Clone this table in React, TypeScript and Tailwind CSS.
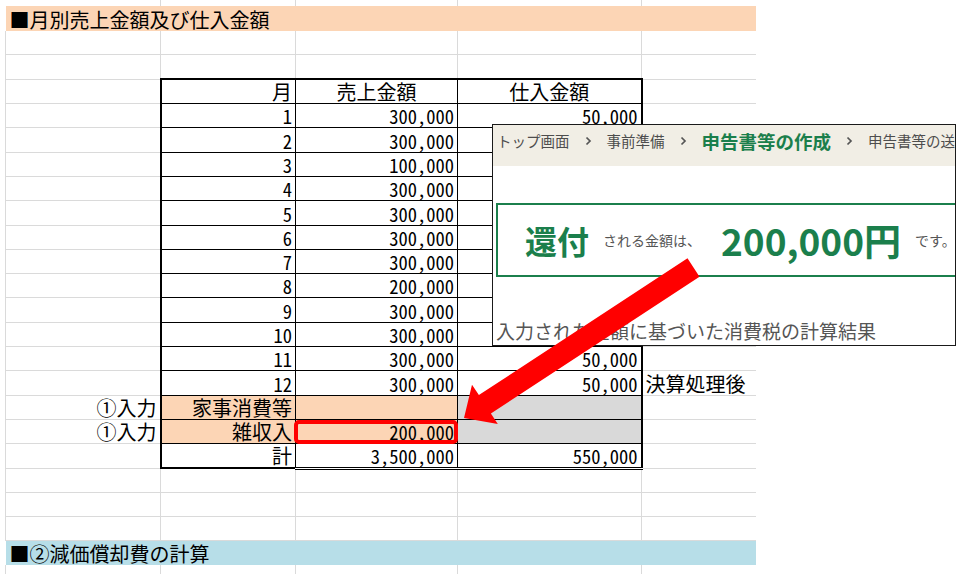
import React from "react";

const GREEN = "text-[#1b7f4c]";

type CellProps = { children?: React.ReactNode; className?: string; colSpan?: number };

// plain spreadsheet cell with light gridlines
function G({ children, className = "", colSpan }: CellProps) {
  return (
    <td
      colSpan={colSpan}
      className={
        "border-r border-b border-[#dadada] align-bottom leading-[20px] pb-[1px] whitespace-nowrap " +
        className
      }
    >
      {children}
    </td>
  );
}

// cell inside the bordered table
function T({ children, className = "", colSpan }: CellProps) {
  return (
    <td
      colSpan={colSpan}
      className={
        "border border-black align-bottom leading-[20px] pb-[1px] whitespace-nowrap " + className
      }
    >
      {children}
    </td>
  );
}

const NUM = "text-[18.5px] [font-feature-settings:'hwid'] text-right pr-[3px]";
const JP = "text-[20px]";

const months: [number, string, string][] = [
  [1, "300,000", "50,000"],
  [2, "300,000", "50,000"],
  [3, "100,000", "50,000"],
  [4, "300,000", "50,000"],
  [5, "300,000", "50,000"],
  [6, "300,000", "50,000"],
  [7, "300,000", "50,000"],
  [8, "200,000", "50,000"],
  [9, "300,000", "50,000"],
  [10, "300,000", "50,000"],
  [11, "300,000", "50,000"],
  [12, "300,000", "50,000"],
];

function EmptyRow() {
  return (
    <tr className="h-[24.3px]">
      <G className="border-l" />
      <G />
      <G />
      <G />
      <G className="border-r-0" />
    </tr>
  );
}

function Chevron() {
  return (
    <svg width="7" height="10" viewBox="0 0 7 10" className="mx-[15px] shrink-0">
      <path d="M1.5 1.5 L5 5 L1.5 8.5" fill="none" stroke="#555" strokeWidth="1.7" />
    </svg>
  );
}

export default function App() {
  return (
    <div className="relative w-[961px] h-[574px] overflow-hidden bg-white text-black font-['Noto_Sans_CJK_JP',sans-serif]">
      <table className="ml-[5px] table-fixed border-collapse w-[750px]">
        <colgroup>
          <col className="w-[155px]" />
          <col className="w-[135px]" />
          <col className="w-[162px]" />
          <col className="w-[184px]" />
          <col className="w-[114px]" />
        </colgroup>
        <tbody>
          <tr className="h-[6.4px]">
            <td className="border-r border-[#dadada]" />
            <td className="border-r border-[#dadada]" />
            <td className="border-r border-[#dadada]" />
            <td className="border-r border-[#dadada]" />
            <td />
          </tr>
          <tr className="h-[24.3px]">
            <td colSpan={5} className={"bg-[#fcd5b5] align-bottom leading-[20px] pb-[1px] pl-[4px] whitespace-nowrap " + JP}>
              ■月別売上金額及び仕入金額
            </td>
          </tr>
          <EmptyRow />
          <EmptyRow />
          {/* header */}
          <tr className="h-[24.3px]">
            <G className="border-l" />
            <T className={"border-l-2 border-t-2 text-right pr-[3px] " + JP}>月</T>
            <T className={"border-t-2 text-center " + JP}>売上金額</T>
            <T className={"border-t-2 border-r-2 text-center " + JP}>仕入金額</T>
            <G className="border-r-0" />
          </tr>
          {months.map(([m, s, p]) => (
            <tr key={m} className="h-[24.3px]">
              <G className="border-l" />
              <T className={"border-l-2 " + NUM}>{m}</T>
              <T className={NUM}>{s}</T>
              <T className={"border-r-2 " + NUM}>{p}</T>
              <G className={"border-r-0 pl-[3px] " + JP}>{m === 12 ? "決算処理後" : ""}</G>
            </tr>
          ))}
          <tr className="h-[24.3px]">
            <G className={"border-l text-right pr-[3px] " + JP}>①入力</G>
            <T className={"border-l-2 bg-[#fcd5b5] text-right pr-[3px] " + JP}>家事消費等</T>
            <T className="bg-[#fcd5b5]" />
            <T className="border-r-2 bg-[#d9d9d9]" />
            <G className="border-r-0" />
          </tr>
          <tr className="h-[24.3px]">
            <G className={"border-l text-right pr-[3px] " + JP}>①入力</G>
            <T className={"border-l-2 bg-[#fcd5b5] text-right pr-[3px] " + JP}>雑収入</T>
            <T className={"relative bg-[#fcd5b5] " + NUM}>
              200,000
              <span className="absolute left-[-2px] right-[-1px] top-0 bottom-[-1px] border-[4px] border-[#ff0000] rounded-[5px]" />
            </T>
            <T className="border-r-2 bg-[#d9d9d9]" />
            <G className="border-r-0" />
          </tr>
          <tr className="h-[24.3px]">
            <G className="border-l" />
            <T className={"border-l-2 border-b-2 text-right pr-[3px] " + JP}>計</T>
            <T className={"border-b-[3px] [border-bottom-style:double] " + NUM}>3,500,000</T>
            <T className={"border-r-2 border-b-[3px] [border-bottom-style:double] " + NUM}>550,000</T>
            <G className="border-r-0" />
          </tr>
          <EmptyRow />
          <EmptyRow />
          <EmptyRow />
          <tr className="h-[24.3px]">
            <td colSpan={5} className={"bg-[#b7dee8] align-bottom leading-[20px] pb-[1px] pl-[4px] whitespace-nowrap " + JP}>
              ■②減価償却費の計算
            </td>
          </tr>
          <EmptyRow />
        </tbody>
      </table>

      {/* pasted screenshot of e-Tax result */}
      <div className="absolute left-[492px] top-[124px] w-[464px] h-[222px] border border-[#1a1a1a] bg-white overflow-hidden flex flex-col">
        <div className="h-[41px] shrink-0 bg-[#f1eee5] flex items-center pb-[9px] pl-[4px] text-[14.5px] text-[#4d4d4d] whitespace-nowrap leading-none">
          <span>トップ画面</span>
          <Chevron />
          <span>事前準備</span>
          <Chevron />
          <span className={"text-[18.5px] font-bold " + GREEN}>申告書等の作成</span>
          <Chevron />
          <span>申告書等の送付</span>
        </div>
        <div className="mt-[37px] ml-[3px] w-[520px] h-[74px] shrink-0 border-2 border-[#1b7f4c] flex items-center pl-[27px] whitespace-nowrap leading-none">
          <span className={"text-[32px] font-bold " + GREEN}>還付</span>
          <span className="ml-[14px] text-[14px] text-[#555]">される金額は、</span>
          <span className={"ml-[20px] text-[37px] font-bold " + GREEN}>200,000円</span>
          <span className="ml-[14px] text-[14px] text-[#555]">です。</span>
        </div>
        <div className="mt-[44px] ml-[3px] text-[19px] leading-none text-[#555] whitespace-nowrap">
          入力された金額に基づいた消費税の計算結果
        </div>
      </div>

      {/* red arrow */}
      <svg className="absolute left-0 top-0 pointer-events-none" width="961" height="574" viewBox="0 0 961 574">
        <polygon
          points="464,418 472,384.7 478.9,395.1 687.5,258.3 699.5,276.7 490.9,413.5 497.8,423.9"
          fill="#ff0000"
        />
      </svg>
    </div>
  );
}
